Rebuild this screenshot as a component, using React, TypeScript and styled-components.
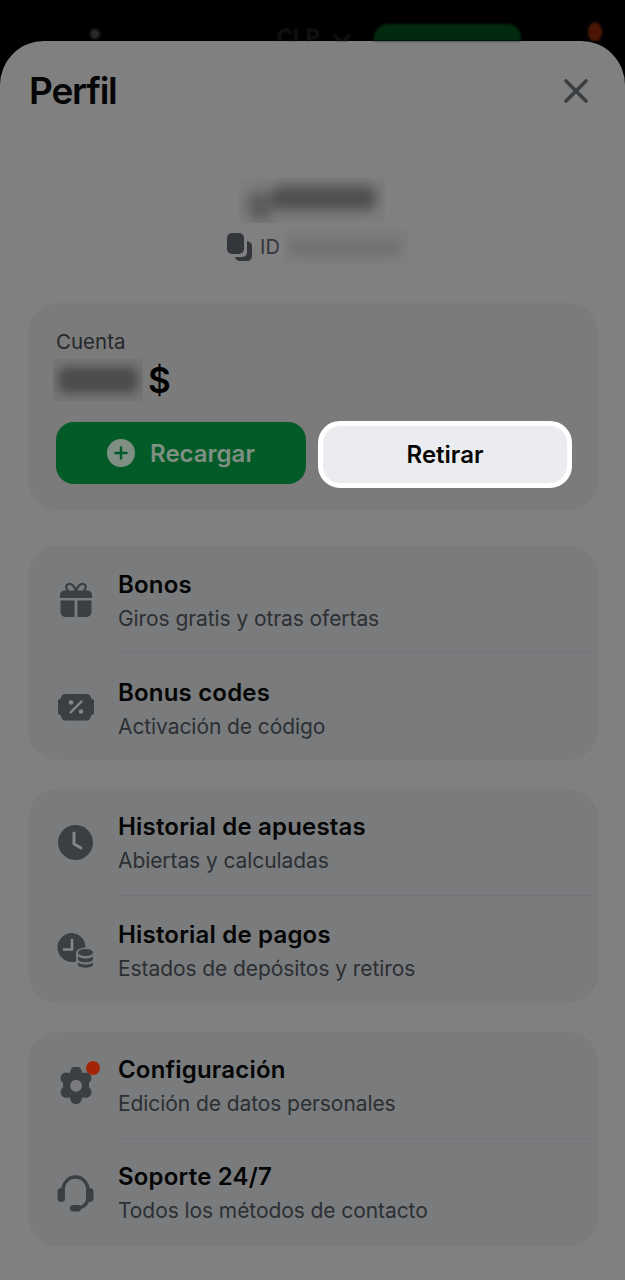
import React from "react";
import styled, { createGlobalStyle } from "styled-components";

const Global = createGlobalStyle`
  html, body { margin: 0; padding: 0; background: #000; }
  body { font-family: Inter, "Liberation Sans", sans-serif; }
  #root { width: 625px; height: 1280px; overflow: hidden; }
`;

const Page = styled.div`
  width: 625px;
  height: 1280px;
  display: flex;
  flex-direction: column;
  background: #000;
  overflow: hidden;
`;

const TopBar = styled.div`
  height: 41px;
  flex: none;
  display: flex;
  align-items: flex-start;
  overflow: hidden;
  filter: blur(1px);
`;

const TopDot = styled.span`
  width: 10px;
  height: 10px;
  margin: 29px 0 0 90px;
  border-radius: 50%;
  background: #2a2a2a;
`;

const TopCurrency = styled.span`
  margin: 24px 0 0 177px;
  font-size: 22px;
  line-height: 26px;
  color: #1c1c1c;
  display: flex;
  align-items: center;
  gap: 12px;
  width: 72px;
  svg { flex: none; margin-top: 4px; }
`;

const TopPill = styled.span`
  width: 147px;
  height: 40px;
  margin: 24px 0 0 25px;
  border-radius: 14px;
  background: #012a10;
`;

const TopBadge = styled.span`
  width: 14px;
  height: 20px;
  margin: 22px 0 0 67px;
  border-radius: 50%;
  background: #4a1505;
`;

const Sheet = styled.div`
  flex: 1;
  background: #808080;
  border-radius: 44px 44px 0 0;
  padding: 0 27px 0 28px;
  display: flex;
  flex-direction: column;
  min-height: 0;
`;

const Header = styled.header`
  height: 96px;
  display: flex;
  align-items: center;
  justify-content: space-between;
  padding: 3px 9px 0 1px;
  box-sizing: border-box;
  flex: none;
`;

const Title = styled.h1`
  margin: 0;
  font-size: 37px;
  font-weight: 600;
  letter-spacing: -1.2px;
  color: #050505;
`;

const Profile = styled.section`
  display: flex;
  flex-direction: column;
  align-items: center;
  height: 166px;
  flex: none;
`;

const NameMask = styled.div`
  width: 146px;
  height: 45px;
  margin: 41px 0 0 -2px;
  background: #7d7d7d;
  overflow: hidden;
  display: flex;
  align-items: center;
  justify-content: center;
`;

const NameBlur = styled.div`
  width: 128px;
  display: flex;
  align-items: flex-start;
  filter: blur(6px);
`;

const NamePiece = styled.span<{ $w: number; $h: number; $top: number; $shade: string }>`
  width: ${(p) => p.$w}px;
  height: ${(p) => p.$h}px;
  margin-top: ${(p) => p.$top}px;
  background: ${(p) => p.$shade};
  border-radius: 8px;
`;

const IdRow = styled.div`
  display: flex;
  align-items: center;
  margin: 9px 0 0 8px;
  font-size: 20px;
  color: #33363a;
  height: 30px;
`;

const IdLabel = styled.span`
  margin-left: 6px;
`;

const IdMask = styled.div`
  width: 125px;
  height: 36px;
  margin-left: 3px;
  background: #7e7e7e;
  display: flex;
  align-items: center;
  justify-content: center;
  overflow: hidden;
`;

const IdBlur = styled.div`
  width: 112px;
  height: 18px;
  border-radius: 6px;
  background: #727272;
  filter: blur(5px);
`;

const Card = styled.section<{ $gap: number }>`
  background: #797b7d;
  border-radius: 30px;
  margin-top: ${(p) => p.$gap}px;
  flex: none;
`;

const AccountCard = styled(Card)`
  height: 207px;
  padding: 26px 26px 0 28px;
  box-sizing: border-box;
  background: #7b7b7b;
`;

const AccountLabel = styled.div`
  font-size: 20.5px;
  line-height: 26px;
  color: #25272a;
`;

const Balance = styled.div`
  display: flex;
  align-items: center;
  height: 44px;
  margin-top: 3px;
  gap: 5px;
`;

const BalanceMask = styled.div`
  width: 90px;
  height: 42px;
  margin-left: -3px;
  background: #767676;
  display: flex;
  align-items: center;
  justify-content: center;
  overflow: hidden;
`;

const BalanceBlur = styled.div`
  width: 80px;
  height: 26px;
  border-radius: 8px;
  background: #4c4c4c;
  filter: blur(5px);
`;

const Currency = styled.span`
  font-size: 35px;
  font-weight: 600;
  color: #000;
`;

const Actions = styled.div`
  display: flex;
  align-items: flex-start;
  margin-top: 20px;
  gap: 13px;
`;

const TopUp = styled.button`
  width: 250px;
  height: 62px;
  border: 0;
  border-radius: 18px;
  background: #035c27;
  color: #7f8f84;
  font: 600 24px Inter, sans-serif;
  display: flex;
  align-items: center;
  justify-content: center;
  gap: 15px;
  padding: 0;
`;

const Withdraw = styled.button`
  width: 254px;
  height: 67px;
  margin: -1px 0 0 -1px;
  box-sizing: border-box;
  border: 5px solid #fff;
  border-radius: 22px;
  background: #ebecef;
  color: #050505;
  font: 600 24px Inter, sans-serif;
  padding: 0;
`;

const Row = styled.div`
  height: 107px;
  display: flex;
  align-items: center;
  box-sizing: border-box;
  padding-left: 29px;
`;

const IconWrap = styled.div`
  position: relative;
  width: 38px;
  height: 38px;
  flex: none;
  color: #3b3e43;
  svg { display: block; }
`;

const Notice = styled.span`
  position: absolute;
  top: -6px;
  right: -5px;
  width: 14px;
  height: 14px;
  border-radius: 50%;
  background: #a32505;
`;

const TextCol = styled.div<{ $divider?: boolean; $shift: number }>`
  flex: 1;
  margin: 0 5px 0 23px;
  height: 107px;
  display: flex;
  flex-direction: column;
  box-sizing: border-box;
  justify-content: center;
  gap: 5px;
  padding-top: ${(p) => p.$shift}px;
  border-bottom: ${(p) => (p.$divider ? "1px solid #737578" : "0")};
`;

const RowTitle = styled.div`
  font-size: 24px;
  line-height: 29px;
  font-weight: 600;
  letter-spacing: 0.19px;
  color: #050505;
`;

const RowSub = styled.div`
  font-size: 21px;
  line-height: 29px;
  letter-spacing: -0.08px;
  color: #2c2f33;
`;

const Gift = () => (
  <svg width="38" height="38" viewBox="0 0 38 38" fill="currentColor">
    <path d="M3 17v-3c0-2.500 2-4.500 4.500-4.500h23c2.500 0 4.500 2 4.500 4.500v3z" />
    <path d="M3.500 19.500h14V36H9c-3.300 0-5.500-2.200-5.500-5.500zM20.500 19.500h14v11c0 3.300-2.200 5.500-5.500 5.500h-8.500z" />
    <path d="M19 10c-1.500-5-4.500-8-7.500-7-3 1-3 5 0 7M19 10c1.500-5 4.500-8 7.500-7 3 1 3 5 0 7" fill="none" stroke="currentColor" strokeWidth="2.300" />
  </svg>
);

const Coupon = () => (
  <svg width="38" height="38" viewBox="0 0 38 38">
    <path fill="currentColor" d="M8 6h22c2 0 3 1 3.500 2.500.5 2 1.500 3 3.500 3.500v14c-2 .5-3 1.500-3.500 3.500C33 31 32 32.500 30 32.500H8c-2 0-3-1.500-3.500-3-.5-2-1.500-3-3.500-3.500V12c2-.5 3-1.500 3.500-3.500C5 7 6 6 8 6z" />
    <path d="M24.500 13.500l-11 11" stroke="#85878a" strokeWidth="2.400" strokeLinecap="round" />
    <circle cx="14" cy="14.500" r="2.300" fill="#85878a" />
    <circle cx="24" cy="23.500" r="2.300" fill="#85878a" />
  </svg>
);

const Clock = () => (
  <svg width="38" height="38" viewBox="0 0 38 38">
    <circle cx="18.500" cy="18.500" r="17.500" fill="currentColor" />
    <path d="M17 9v11l7 4" fill="none" stroke="#85878a" strokeWidth="3" strokeLinecap="round" strokeLinejoin="round" />
  </svg>
);

const PayHistory = () => (
  <svg width="38" height="38" viewBox="0 0 38 38">
    <path fill="currentColor" d="M15 2a14.500 14.500 0 1 0 0 29c1.500 0 3-.2 4-.6V22c0-3 3-5 9.500-5.500A14.500 14.500 0 0 0 15 2z" />
    <path d="M15 9v9.500H7" fill="none" stroke="#85878a" strokeWidth="2.600" strokeLinecap="round" strokeLinejoin="round" />
    <g fill="currentColor">
      <ellipse cx="28.500" cy="21.500" rx="7.500" ry="3.600" />
      <path d="M21 25.500c2 1.500 4.500 2 7.500 2s5.500-.5 7.500-2V29c-1.500 1.500-4 2.200-7.500 2.200S22.500 30.500 21 29z" />
      <path d="M21 31.500c2 1.500 4.500 2 7.500 2s5.500-.5 7.500-2V34c-1 1.700-4 2.800-7.500 2.800S22 35.700 21 34z" />
    </g>
  </svg>
);

const Gear = () => (
  <svg width="38" height="38" viewBox="0 0 38 38">
    <g transform="translate(-1.500 -1.800) scale(1.08)">
      <path fill="currentColor" fillRule="evenodd" d="M19 1c3 0 4.800 2 5.400 5l.2.800 1 .5c2.800-1 5.400-.6 7 2 1.500 2.600.6 5-1.600 7v4.400c2.200 2 3.100 4.400 1.600 7-1.600 2.600-4.200 3-7 2l-1 .5-.2.800c-.6 3-2.400 5-5.400 5s-4.800-2-5.400-5l-.2-.8-1-.5c-2.800 1-5.400.6-7-2-1.500-2.600-.6-5 1.600-7v-4.400c-2.200-2-3.100-4.400-1.600-7 1.600-2.600 4.200-3 7-2l1-.5.2-.8C14.200 3 16 1 19 1zm0 12.500a5.500 5.500 0 1 0 0 11 5.500 5.500 0 0 0 0-11z" />
    </g>
  </svg>
);

const Headset = () => (
  <svg width="38" height="38" viewBox="0 0 38 38">
    <path d="M6 17C6 8.500 11.500 3 18.500 3S31 8.500 31 17M31 24c0 5-4 9-9 10" fill="none" stroke="currentColor" strokeWidth="3.400" />
    <rect x="0.500" y="14" width="7.500" height="14" rx="3.700" fill="currentColor" />
    <rect x="29" y="14" width="7.500" height="14" rx="3.700" fill="currentColor" />
    <rect x="13" y="31" width="11" height="6.500" rx="3.250" fill="currentColor" />
  </svg>
);

const CloseIcon = styled.svg`
  display: block;
`;

const Close = () => (
  <CloseIcon width="26" height="26" viewBox="0 0 26 26">
    <path d="M3 3l20 20M23 3L3 23" stroke="#3a3d41" strokeWidth="3.600" strokeLinecap="round" />
  </CloseIcon>
);

const Copy = () => (
  <CloseIcon width="28" height="30" viewBox="0 0 28 30">
    <rect x="1" y="1" width="17" height="21" rx="5" fill="#33363b" />
    <path d="M21 9c3 .5 5 2.500 5 5v10c0 3-2 5-5 5h-7c-2.500 0-4.500-1.500-5-4h7c3 0 5-2 5-5z" fill="#33363b" />
  </CloseIcon>
);

const Plus = () => (
  <CloseIcon width="28" height="28" viewBox="0 0 28 28">
    <circle cx="14" cy="14" r="14" fill="#7f8f84" />
    <path d="M14 8.500v11M8.500 14h11" stroke="#035c27" strokeWidth="2.400" strokeLinecap="round" />
  </CloseIcon>
);

const Chevron = () => (
  <svg width="20" height="12" viewBox="0 0 20 12">
    <path d="M2 2l8 8 8-8" fill="none" stroke="#1c1c1c" strokeWidth="2.400" />
  </svg>
);

type Item = { icon: React.ReactNode; title: string; sub: string; notice?: boolean };

const groups: { gap: number; shift: number; items: Item[] }[] = [
  {
    gap: 36,
    shift: 5,
    items: [
      { icon: <Gift />, title: "Bonos", sub: "Giros gratis y otras ofertas" },
      { icon: <Coupon />, title: "Bonus codes", sub: "Activación de código" },
    ],
  },
  {
    gap: 29,
    shift: 3,
    items: [
      { icon: <Clock />, title: "Historial de apuestas", sub: "Abiertas y calculadas" },
      { icon: <PayHistory />, title: "Historial de pagos", sub: "Estados de depósitos y retiros" },
    ],
  },
  {
    gap: 29,
    shift: 2,
    items: [
      { icon: <Gear />, title: "Configuración", sub: "Edición de datos personales", notice: true },
      { icon: <Headset />, title: "Soporte 24/7", sub: "Todos los métodos de contacto" },
    ],
  },
];

export default function App() {
  return (
    <Page>
      <Global />
      <TopBar>
        <TopDot />
        <TopCurrency>
          CLP
          <Chevron />
        </TopCurrency>
        <TopPill />
        <TopBadge />
      </TopBar>
      <Sheet>
        <Header>
          <Title>Perfil</Title>
          <Close />
        </Header>
        <Profile>
          <NameMask>
            <NameBlur>
              <NamePiece $w={24} $h={28} $top={10} $shade="#5c5c5c" />
              <NamePiece $w={104} $h={24} $top={4} $shade="#4f4f4f" />
            </NameBlur>
          </NameMask>
          <IdRow>
            <Copy />
            <IdLabel>ID</IdLabel>
            <IdMask>
              <IdBlur />
            </IdMask>
          </IdRow>
        </Profile>
        <AccountCard $gap={0}>
          <AccountLabel>Cuenta</AccountLabel>
          <Balance>
            <BalanceMask>
              <BalanceBlur />
            </BalanceMask>
            <Currency>$</Currency>
          </Balance>
          <Actions>
            <TopUp>
              <Plus />
              Recargar
            </TopUp>
            <Withdraw>Retirar</Withdraw>
          </Actions>
        </AccountCard>
        {groups.map((g) => (
          <Card key={g.items[0].title} $gap={g.gap}>
            {g.items.map((it, i) => (
              <Row key={it.title}>
                <IconWrap>
                  {it.icon}
                  {it.notice && <Notice />}
                </IconWrap>
                <TextCol $divider={i === 0} $shift={g.shift}>
                  <RowTitle>{it.title}</RowTitle>
                  <RowSub>{it.sub}</RowSub>
                </TextCol>
              </Row>
            ))}
          </Card>
        ))}
      </Sheet>
    </Page>
  );
}
